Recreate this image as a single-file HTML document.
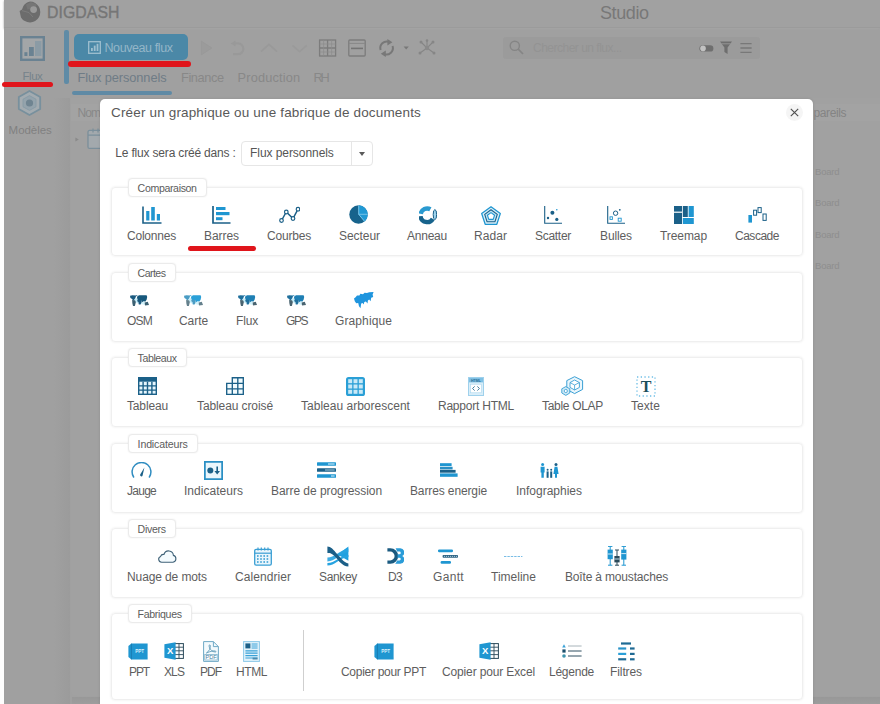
<!DOCTYPE html>
<html><head><meta charset="utf-8"><title>Studio</title>
<style>
html,body{margin:0;padding:0}
body{width:880px;height:704px;overflow:hidden;position:relative;background:#a0a0a0;font-family:"Liberation Sans",sans-serif}
.abs{position:absolute}
.lb,.bg{position:absolute;text-align:center;white-space:nowrap;line-height:16px;height:16px}
.bg{text-align:left}
.fs{position:absolute;border:1px solid #efefef;border-radius:4px;box-sizing:border-box;box-shadow:0 0 2.5px rgba(0,0,0,0.09)}
.lg{position:absolute;border:1px solid #ebebeb;border-radius:4px;box-shadow:0 0 2px rgba(0,0,0,0.07);box-sizing:border-box;background:#fff;font-size:11px;color:#4a4a4a;text-align:center;line-height:17px;white-space:nowrap}
</style></head><body>

<div class="abs" style="left:0;top:0;width:4.4px;height:704px;background:#fdfdfd"></div>
<div class="abs" style="left:4.4px;top:0;width:876px;height:27px;background:#a1a1a1;border-bottom:1px solid #9b9b9b;box-shadow:0 1px 2px #a4a4a4"></div>
<div class="abs" style="left:54px;top:98px;width:16px;height:606px;background:linear-gradient(90deg,#a0a0a0,#9b9b9b)"></div>
<div class="abs" style="left:71px;top:98px;width:809px;height:598px;background:#a1a1a1;border-radius:0 0 0 6px"></div>
<div class="abs" style="left:71px;top:104px;width:40px;height:17px;background:#a3a3a3"></div>
<div class="abs" style="left:813px;top:104px;width:67px;height:17px;background:#a3a3a3"></div>
<div class="abs" style="left:72px;top:697px;width:808px;height:7px;background:linear-gradient(#989898,#9d9d9d)"></div>
<svg style="position:absolute;left:19.0px;top:1.0px" width="22" height="22" viewBox="0 0 22 22">
<path d="M11 0.6A10.4 10.4 0 1 1 2 16.4L0.6 10L3 8.4A10.4 10.4 0 0 1 11 0.6Z" fill="#6c6c6c"/>
<path d="M7 3.6L12 1L18 3.6L15 8L8.4 8.6Z" fill="#767676"/>
<circle cx="14.6" cy="8.6" r="3.4" fill="#9a9a9a"/>
<path d="M3 9.6L10 11.6L14 16" fill="none" stroke="#808080" stroke-width="0.8"/></svg>
<span class="bg" style="left:47px;top:2.83px;line-height:20px;height:20px;font-size:15.8px;letter-spacing:0.09px;color:#767676;-webkit-text-stroke:0.35px #767676;">DIGDASH</span>
<span class="bg" style="left:600px;top:2.76px;line-height:20px;height:20px;font-size:18px;letter-spacing:-0.41px;color:#787878;">Studio</span>
<svg style="position:absolute;left:19.9px;top:35.7px" width="25" height="25" viewBox="0 0 25 25">
<rect x="1.2" y="1.2" width="22.6" height="22.6" fill="#a3a6a8" stroke="#6a8292" stroke-width="2.4"/>
<rect x="4.4" y="16.2" width="3" height="3.8" fill="#6a8292"/>
<rect x="9" y="11" width="4.8" height="9" fill="#6a8292"/>
<rect x="15" y="5" width="6.4" height="15" fill="#8b9ba5"/></svg>
<span class="bg" style="left:22.5px;top:65.62px;line-height:20px;height:20px;font-size:11.5px;letter-spacing:-0.47px;color:#76838b;">Flux</span>
<div class="abs" style="left:2px;top:82.1px;width:50.5px;height:4.6px;border-radius:3px;background:#e0151b"></div>
<svg style="position:absolute;left:17.0px;top:90.0px" width="25" height="26" viewBox="0 0 25 26">
<path d="M12.5 1L23.2 7V19L12.5 25L1.8 19V7Z" fill="#a3abb0" stroke="#78909d" stroke-width="1.8" stroke-linejoin="round"/>
<path d="M12.5 5.6L19 9.2V16.8L12.5 20.4L6 16.8V9.2Z" fill="#94a3ac" stroke="#8599a4" stroke-width="0.8"/>
<circle cx="12.5" cy="13" r="3.6" fill="#6f8491"/></svg>
<span class="bg" style="left:8.6px;top:119.72px;line-height:20px;height:20px;font-size:11.5px;letter-spacing:-0.04px;color:#808080;">Modèles</span>
<div class="abs" style="left:64px;top:30px;width:5px;height:54px;background:#5f8ba6;border-radius:2px"></div>
<div class="abs" style="left:74px;top:34px;width:114px;height:26px;background:#4b88a7;border-radius:5px"></div>
<svg style="position:absolute;left:88.2px;top:41.2px" width="13" height="13" viewBox="0 0 13 13">
<rect x="0.7" y="0.7" width="11.6" height="11.6" fill="none" stroke="#9fbfcf" stroke-width="1.3"/>
<rect x="3" y="7" width="1.8" height="3" fill="#9fbfcf"/><rect x="5.8" y="4.6" width="1.8" height="5.4" fill="#9fbfcf"/><rect x="8.6" y="2.8" width="1.8" height="7.2" fill="#9fbfcf"/></svg>
<span class="bg" style="left:104.5px;top:38.47px;line-height:20px;height:20px;font-size:12.5px;letter-spacing:-0.41px;color:#94b6c8;">Nouveau flux</span>
<div class="abs" style="left:68px;top:61px;width:123px;height:5.5px;border-radius:3px;background:#e0151b"></div>
<svg style="position:absolute;left:200.0px;top:39.0px" width="236" height="18" viewBox="0 0 236 18">
<path d="M1.4 2.2L11.8 9L1.4 15.8Z" fill="#9b9b9b" stroke="#999" stroke-width="1"/>
<path d="M33 4.4H38A5.4 5.4 0 0 1 38 15.2H33" fill="none" stroke="#999" stroke-width="2.2"/><path d="M30.6 4.4L35.6 1.4V7.4Z" fill="#999"/>
<path d="M61 12.6L69 5.4L77 12.6" fill="none" stroke="#999" stroke-width="1.8"/>
<path d="M92.4 6.4L99.6 12.6L106.8 6.4" fill="none" stroke="#9a9a9a" stroke-width="1.8"/>
<rect x="119.6" y="1" width="16" height="16" fill="none" stroke="#7c7c7c" stroke-width="1.3"/><path d="M119.6 9H135.6M127.6 1V17" stroke="#7c7c7c" stroke-width="1.3"/><path d="M119.6 5H135.6M119.6 13H135.6M123.6 1V17M131.6 1V17" stroke="#8c8c8c" stroke-width="0.7"/>
<rect x="148.8" y="1" width="16.4" height="16" rx="1" fill="none" stroke="#7c7c7c" stroke-width="1.3"/><path d="M148.8 4.4H165.2" stroke="#888" stroke-width="1"/><path d="M151 9.4H163" stroke="#747474" stroke-width="1.6"/>
<path d="M180.6 11A6.6 6.6 0 0 1 189 2.8" fill="none" stroke="#787878" stroke-width="2"/><path d="M187.4 0L192.4 3.2L187.4 6.4Z" fill="#787878"/>
<path d="M192.6 7A6.6 6.6 0 0 1 184.2 15.2" fill="none" stroke="#787878" stroke-width="2"/><path d="M185.8 18L180.8 14.8L185.8 11.6Z" fill="#787878"/>
<path d="M203.6 7.4H208.8L206.2 10.6Z" fill="#787878"/>
<path d="M227 9L221 3M227 9L233 3M227 9L220 14M227 9L234 14M227 9V1.6" stroke="#868686" stroke-width="1.1" fill="none"/>
<circle cx="227" cy="9" r="2.2" fill="#8a8a8a"/><circle cx="221" cy="3" r="1.5" fill="#868686"/><circle cx="233" cy="3" r="1.5" fill="#868686"/><circle cx="220" cy="14" r="1.5" fill="#868686"/><circle cx="234" cy="14" r="1.5" fill="#868686"/><circle cx="227" cy="1.6" r="1.3" fill="#868686"/></svg>
<div class="abs" style="left:502.5px;top:36.5px;width:257.5px;height:22px;background:#9b9b9b;border-radius:3px"></div>
<svg style="position:absolute;left:508.5px;top:40.0px" width="15" height="15" viewBox="0 0 15 15"><circle cx="5.8" cy="5.8" r="4.6" fill="none" stroke="#858585" stroke-width="1.4"/><path d="M9.2 9.2L14 14" stroke="#858585" stroke-width="1.7"/></svg>
<span class="bg" style="left:533px;top:37.84px;line-height:20px;height:20px;font-size:12px;letter-spacing:-0.50px;color:#939393;">Chercher un flux...</span>
<svg style="position:absolute;left:699.0px;top:40.5px" width="54" height="14" viewBox="0 0 54 14">
<rect x="0.4" y="4.2" width="14" height="6.4" rx="3.2" fill="#6f6f6f"/><circle cx="4" cy="7.4" r="2.8" fill="#c2c2c2"/>
<path d="M21 0.6H33L28.6 6.4V13L25.4 11V6.4Z" fill="#6e6e6e"/><path d="M22.4 2.8H31.6" stroke="#a0a0a0" stroke-width="0.8"/>
<path d="M41.4 2.6H52.6M41.4 7H52.6M41.4 11.4H52.6" stroke="#787878" stroke-width="1.3"/></svg>
<span class="bg" style="left:77.5px;top:67.56px;line-height:20px;height:20px;font-size:12.8px;letter-spacing:-0.09px;color:#6f7c86;">Flux personnels</span>
<span class="bg" style="left:181px;top:67.56px;line-height:20px;height:20px;font-size:12.8px;letter-spacing:-0.42px;color:#888;">Finance</span>
<span class="bg" style="left:237.5px;top:67.56px;line-height:20px;height:20px;font-size:12.8px;letter-spacing:0.17px;color:#888;">Production</span>
<span class="bg" style="left:313.6px;top:67.56px;line-height:20px;height:20px;font-size:12.8px;letter-spacing:-2.29px;color:#888;">RH</span>
<div class="abs" style="left:72px;top:91px;width:100px;height:3.6px;background:#5f8aa5;border-radius:2px"></div>
<span class="bg" style="left:77.5px;top:102.84px;line-height:20px;height:20px;font-size:12px;letter-spacing:-0.92px;color:#888;">Nom</span>
<span class="bg" style="left:813.5px;top:102.84px;line-height:20px;height:20px;font-size:12px;letter-spacing:-0.39px;color:#848484;">pareils</span>
<span class="bg" style="left:815px;top:161.91px;line-height:20px;height:20px;font-size:9.5px;letter-spacing:-0.21px;color:#8e8e8e;">Board</span>
<span class="bg" style="left:815px;top:193.21px;line-height:20px;height:20px;font-size:9.5px;letter-spacing:-0.21px;color:#8e8e8e;">Board</span>
<span class="bg" style="left:815px;top:224.91px;line-height:20px;height:20px;font-size:9.5px;letter-spacing:-0.21px;color:#8e8e8e;">Board</span>
<span class="bg" style="left:815px;top:256.41px;line-height:20px;height:20px;font-size:9.5px;letter-spacing:-0.21px;color:#8e8e8e;">Board</span>
<svg style="position:absolute;left:75.0px;top:128.0px" width="36" height="22" viewBox="0 0 36 22">
<path d="M0.4 9.4L3.8 11.4L0.4 13.4Z" fill="#8a8a8a"/>
<rect x="13" y="2.4" width="22" height="18" rx="1.5" fill="#a3a9ad" stroke="#7b8f9b" stroke-width="1.3"/>
<path d="M13 7.2H35M18 0.6V4.4M23 0.6V4.4" stroke="#7b8f9b" stroke-width="1.2"/></svg>
<div class="abs" style="left:100px;top:99px;width:713px;height:620px;background:#fff;border-radius:5px;box-shadow:0 0 3px rgba(0,0,0,0.12)"></div>
<span class="bg" style="left:111px;top:102.72px;line-height:20px;height:20px;font-size:13.5px;letter-spacing:0.16px;color:#595959;">Créer un graphique ou une fabrique de documents</span>
<div class="abs" style="left:785.5px;top:104px;width:17px;height:17px;border-radius:9px;background:#f5f5f5"></div>
<svg style="position:absolute;left:789.5px;top:107.8px" width="9" height="9" viewBox="0 0 9 9"><path d="M0.8 0.8L8.2 8.2M8.2 0.8L0.8 8.2" stroke="#505050" stroke-width="1.15" fill="none"/></svg>
<span class="bg" style="left:115.3px;top:143.24px;line-height:20px;height:20px;font-size:12px;letter-spacing:-0.18px;color:#555;">Le flux sera créé dans :</span>
<div class="abs" style="left:241px;top:141px;width:132px;height:25px;border:1px solid #e6e6e6;border-radius:4px;box-sizing:border-box"></div>
<div class="abs" style="left:351px;top:142px;width:1px;height:23px;background:#e6e6e6"></div>
<span class="bg" style="left:250px;top:143.24px;line-height:20px;height:20px;font-size:12px;letter-spacing:-0.06px;color:#555;">Flux personnels</span>
<div class="abs" style="left:358.6px;top:151.5px;width:0;height:0;border-left:3.2px solid transparent;border-right:3.2px solid transparent;border-top:4.5px solid #5a5a5a"></div>
<div class="fs" style="left:111px;top:187px;width:692px;height:69px"></div>
<div class="lg" style="left:128px;top:178px;width:79px;height:18.5px"></div>
<span class="bg" style="left:137.6px;top:177.93px;line-height:20px;height:20px;font-size:10.6px;letter-spacing:-0.36px;color:#5c5c5c;">Comparaison</span>
<div class="fs" style="left:111px;top:272px;width:692px;height:70px"></div>
<div class="lg" style="left:128px;top:263px;width:48px;height:18.5px"></div>
<span class="bg" style="left:137.6px;top:262.93px;line-height:20px;height:20px;font-size:10.6px;letter-spacing:-0.56px;color:#5c5c5c;">Cartes</span>
<div class="fs" style="left:111px;top:357px;width:692px;height:70px"></div>
<div class="lg" style="left:128px;top:348px;width:59px;height:18.5px"></div>
<span class="bg" style="left:137.6px;top:347.93px;line-height:20px;height:20px;font-size:10.6px;letter-spacing:-0.43px;color:#5c5c5c;">Tableaux</span>
<div class="fs" style="left:111px;top:443px;width:692px;height:70px"></div>
<div class="lg" style="left:128px;top:434px;width:70px;height:18.5px"></div>
<span class="bg" style="left:137.6px;top:433.93px;line-height:20px;height:20px;font-size:10.6px;letter-spacing:-0.15px;color:#5c5c5c;">Indicateurs</span>
<div class="fs" style="left:111px;top:528px;width:692px;height:70px"></div>
<div class="lg" style="left:128px;top:519px;width:48px;height:18.5px"></div>
<span class="bg" style="left:137.6px;top:518.93px;line-height:20px;height:20px;font-size:10.6px;letter-spacing:-0.33px;color:#5c5c5c;">Divers</span>
<div class="fs" style="left:111px;top:613px;width:692px;height:87px"></div>
<div class="lg" style="left:128px;top:604px;width:64px;height:18.5px"></div>
<span class="bg" style="left:137.6px;top:603.93px;line-height:20px;height:20px;font-size:10.6px;letter-spacing:-0.34px;color:#5c5c5c;">Fabriques</span>
<div class="abs" style="left:303px;top:630px;width:1px;height:61px;background:#cfcfcf"></div>
<svg style="position:absolute;left:141.5px;top:206.0px" width="20" height="18" viewBox="0 0 20 18">
<path d="M1 0.5V17H19.5" fill="none" stroke="#1b6088" stroke-width="1.6"/>
<rect x="4.2" y="5" width="3.2" height="9.5" fill="#1f96d1"/>
<rect x="9.2" y="1" width="3.6" height="13.5" fill="#1f96d1"/>
<rect x="14.8" y="8" width="3.2" height="6.5" fill="#1f96d1"/></svg>
<span class="lb" style="left:117px;width:69px;top:228px;font-size:12px;letter-spacing:-0.21px;color:#5e5e5e">Colonnes</span>
<svg style="position:absolute;left:212.0px;top:206.0px" width="19" height="18" viewBox="0 0 19 18">
<path d="M1 0V17H18.5" fill="none" stroke="#1b6088" stroke-width="1.7"/>
<rect x="4" y="1" width="9.5" height="3" fill="#1f96d1"/>
<rect x="4" y="6" width="13.5" height="3.2" fill="#1f96d1"/>
<rect x="4" y="11.2" width="6.5" height="3" fill="#1f96d1"/></svg>
<span class="lb" style="left:194px;width:55px;top:228px;font-size:12px;letter-spacing:-0.06px;color:#5e5e5e">Barres</span>
<svg style="position:absolute;left:278.5px;top:206.0px" width="21" height="18" viewBox="0 0 21 18">
<path d="M2.5 14.5L7.3 6L14 12.5L19 3.2" fill="none" stroke="#1b6088" stroke-width="1.5"/>
<g fill="#fff" stroke="#1b6088" stroke-width="1.2"><circle cx="2.5" cy="14.5" r="1.8"/><circle cx="7.3" cy="6" r="1.8"/><circle cx="14" cy="12.5" r="1.8"/><circle cx="19" cy="3.2" r="1.8"/></g></svg>
<span class="lb" style="left:257px;width:64px;top:228px;font-size:12px;letter-spacing:-0.19px;color:#5e5e5e">Courbes</span>
<svg style="position:absolute;left:349.1px;top:205.3px" width="19" height="19" viewBox="0 0 19 19">
<circle cx="9.5" cy="9.5" r="9.2" fill="#17638c"/>
<path d="M9.9 9.1V0.3A9.2 9.2 0 0 1 18.7 9.1Z" fill="#2199d4"/>
<path d="M9.9 9.5H18.7A9.2 9.2 0 0 1 15.6 16.4Z" fill="#2199d4"/>
<path d="M9.7 0.3V9.3H18.7M9.7 9.3L15.6 16.4" fill="none" stroke="#7fd0f5" stroke-width="0.9"/></svg>
<span class="lb" style="left:329px;width:61px;top:228px;font-size:12px;letter-spacing:-0.05px;color:#5e5e5e">Secteur</span>
<svg style="position:absolute;left:418.5px;top:205.5px" width="18" height="19" viewBox="0 0 18 19">
<path d="M1.73 7.8A6.6 6.6 0 0 1 11.4 3.3" fill="none" stroke="#2a9ad0" stroke-width="4.4"/>
<path d="M13.8 12.8A6.6 6.6 0 0 1 1.52 10.1" fill="none" stroke="#17638c" stroke-width="4.4"/>
<ellipse cx="15.9" cy="8.6" rx="1.7" ry="5" fill="#9fd4ee" stroke="#1b6088" stroke-width="1"/></svg>
<span class="lb" style="left:397px;width:60px;top:228px;font-size:12px;letter-spacing:-0.23px;color:#5e5e5e">Anneau</span>
<svg style="position:absolute;left:480.5px;top:205.5px" width="20" height="19" viewBox="0 0 20 19">
<path d="M10 0.8L19.3 7.6L15.8 18.3H4.2L0.7 7.6Z" fill="#d8eef8" stroke="#1f96d1" stroke-width="1.3" stroke-linejoin="round"/>
<path d="M10 3.8L16.3 8.4L13.9 15.8H6.1L3.7 8.4Z" fill="#bfe3f4" stroke="#1b6088" stroke-width="1.1" stroke-linejoin="round"/>
<path d="M10 6.6L13.6 9.2L12.2 13.4H7.8L6.4 9.2Z" fill="#fff" stroke="#1f96d1" stroke-width="1.1" stroke-linejoin="round"/></svg>
<span class="lb" style="left:464px;width:53px;top:228px;font-size:12px;letter-spacing:0.06px;color:#5e5e5e">Radar</span>
<svg style="position:absolute;left:544.0px;top:206.0px" width="18" height="18" viewBox="0 0 18 18">
<path d="M0.7 0V17.3H18" fill="none" stroke="#1b6088" stroke-width="1.1"/>
<circle cx="8.4" cy="6.8" r="2" fill="#1b6088"/><circle cx="4" cy="12" r="1.2" fill="#1b6088"/><circle cx="12.8" cy="13.4" r="1.6" fill="#1b6088"/><circle cx="12.8" cy="3.8" r="0.8" fill="#1f96d1"/></svg>
<span class="lb" style="left:525px;width:56px;top:228px;font-size:12px;letter-spacing:-0.29px;color:#5e5e5e">Scatter</span>
<svg style="position:absolute;left:607.0px;top:206.0px" width="18" height="18" viewBox="0 0 18 18">
<path d="M0.7 0V17.3H18" fill="none" stroke="#1b6088" stroke-width="1.1"/>
<circle cx="8.6" cy="7.2" r="2.2" fill="none" stroke="#1b6088" stroke-width="1"/>
<rect x="3" y="10.8" width="2.4" height="2.6" fill="none" stroke="#1f96d1" stroke-width="0.9"/>
<rect x="11.2" y="12.2" width="3" height="3" fill="none" stroke="#1f96d1" stroke-width="0.9"/>
<circle cx="12.8" cy="3.8" r="0.9" fill="#1b6088"/></svg>
<span class="lb" style="left:590px;width:52px;top:228px;font-size:12px;letter-spacing:-0.11px;color:#5e5e5e">Bulles</span>
<svg style="position:absolute;left:673.5px;top:206.0px" width="20" height="18" viewBox="0 0 20 18">
<rect x="0" y="0" width="8" height="5.6" fill="#1b6088"/><rect x="0" y="6.8" width="8" height="11.2" fill="#1b6088"/>
<rect x="8.8" y="0" width="5" height="11" fill="#1b6088"/><rect x="14.6" y="0" width="5.2" height="11" fill="#1f96d1"/>
<rect x="8.8" y="12" width="11" height="6" fill="#1f96d1"/></svg>
<span class="lb" style="left:650px;width:67px;top:228px;font-size:12px;letter-spacing:-0.08px;color:#5e5e5e">Treemap</span>
<svg style="position:absolute;left:747.5px;top:207.0px" width="19" height="16" viewBox="0 0 19 16">
<rect x="0.4" y="8" width="3.6" height="7.6" fill="#1f96d1"/>
<rect x="5.6" y="3.2" width="3" height="5" fill="none" stroke="#1b6088" stroke-width="1"/>
<rect x="10" y="0.6" width="3.2" height="5" fill="none" stroke="#1b6088" stroke-width="1"/>
<rect x="15" y="7" width="3.2" height="6.4" fill="none" stroke="#1b6088" stroke-width="1"/></svg>
<span class="lb" style="left:725px;width:64px;top:228px;font-size:12px;letter-spacing:-0.48px;color:#5e5e5e">Cascade</span>
<svg style="position:absolute;left:130.0px;top:294.7px" width="19" height="11" viewBox="0 0 19 11">
<path d="M5.6 2.8L7 3.2L7.4 6.2L8.4 7.2L8.6 9L5.6 7L4.6 5.2Z" fill="#c4effb"/>
<path d="M11.8 6.8L12.6 7.2L13.8 6L15.2 6.8L14.6 7.6L15 10L11 9Z" fill="#d2f3fc"/>
<path d="M0 0.8L2.4 0.2L6.2 0.4L5.6 2.6L4.4 4.4L3.6 5.4L2.4 4.4L1.4 3.6L0.4 3Z" fill="#1b5a80"/>
<path d="M2.1 5.1L5 5.2L5.9 7L4.9 10.9L3 10.9L2.3 8Z" fill="#3b6072"/>
<path d="M5.9 0.3L7.4 0L7 1.5Z" fill="#17587c"/>
<path d="M7.2 1.4L9 0.2L16.6 0.2L17.2 2L16.6 4.8L15.2 6.8L13.8 6L12.6 7.2L11.2 5.6L8 5L7 3Z" fill="#17587c"/>
<path d="M7.4 4.6L11.2 5L11.8 6.8L10.6 9.4L8.8 9.4L8.4 7L7.2 6.2Z" fill="#1b5a80"/>
<path d="M14.6 7.6L17.8 6.8L19 10L15 10.4Z" fill="#3b6072"/></svg>
<span class="lb" style="left:117px;width:45px;top:313px;font-size:12px;letter-spacing:-0.78px;color:#5e5e5e">OSM</span>
<svg style="position:absolute;left:184.0px;top:294.7px" width="19" height="11" viewBox="0 0 19 11">
<path d="M5.6 2.8L7 3.2L7.4 6.2L8.4 7.2L8.6 9L5.6 7L4.6 5.2Z" fill="#c4effb"/>
<path d="M11.8 6.8L12.6 7.2L13.8 6L15.2 6.8L14.6 7.6L15 10L11 9Z" fill="#d2f3fc"/>
<path d="M0 0.8L2.4 0.2L6.2 0.4L5.6 2.6L4.4 4.4L3.6 5.4L2.4 4.4L1.4 3.6L0.4 3Z" fill="#4a9cc4"/>
<path d="M2.1 5.1L5 5.2L5.9 7L4.9 10.9L3 10.9L2.3 8Z" fill="#64808c"/>
<path d="M5.9 0.3L7.4 0L7 1.5Z" fill="#2aa0d8"/>
<path d="M7.2 1.4L9 0.2L16.6 0.2L17.2 2L16.6 4.8L15.2 6.8L13.8 6L12.6 7.2L11.2 5.6L8 5L7 3Z" fill="#2aa0d8"/>
<path d="M7.4 4.6L11.2 5L11.8 6.8L10.6 9.4L8.8 9.4L8.4 7L7.2 6.2Z" fill="#4a9cc4"/>
<path d="M14.6 7.6L17.8 6.8L19 10L15 10.4Z" fill="#64808c"/></svg>
<span class="lb" style="left:169px;width:49px;top:313px;font-size:12px;letter-spacing:-0.07px;color:#5e5e5e">Carte</span>
<svg style="position:absolute;left:237.5px;top:294.7px" width="19" height="11" viewBox="0 0 19 11">
<path d="M5.6 2.8L7 3.2L7.4 6.2L8.4 7.2L8.6 9L5.6 7L4.6 5.2Z" fill="#c4effb"/>
<path d="M11.8 6.8L12.6 7.2L13.8 6L15.2 6.8L14.6 7.6L15 10L11 9Z" fill="#d2f3fc"/>
<path d="M0 0.8L2.4 0.2L6.2 0.4L5.6 2.6L4.4 4.4L3.6 5.4L2.4 4.4L1.4 3.6L0.4 3Z" fill="#1f6f9c"/>
<path d="M2.1 5.1L5 5.2L5.9 7L4.9 10.9L3 10.9L2.3 8Z" fill="#4a6470"/>
<path d="M5.9 0.3L7.4 0L7 1.5Z" fill="#1e7fb4"/>
<path d="M7.2 1.4L9 0.2L16.6 0.2L17.2 2L16.6 4.8L15.2 6.8L13.8 6L12.6 7.2L11.2 5.6L8 5L7 3Z" fill="#1e7fb4"/>
<path d="M7.4 4.6L11.2 5L11.8 6.8L10.6 9.4L8.8 9.4L8.4 7L7.2 6.2Z" fill="#1f6f9c"/>
<path d="M14.6 7.6L17.8 6.8L19 10L15 10.4Z" fill="#4a6470"/></svg>
<span class="lb" style="left:226px;width:42px;top:313px;font-size:12px;letter-spacing:-0.17px;color:#5e5e5e">Flux</span>
<svg style="position:absolute;left:287.0px;top:294.7px" width="19" height="11" viewBox="0 0 19 11">
<path d="M5.6 2.8L7 3.2L7.4 6.2L8.4 7.2L8.6 9L5.6 7L4.6 5.2Z" fill="#c4effb"/>
<path d="M11.8 6.8L12.6 7.2L13.8 6L15.2 6.8L14.6 7.6L15 10L11 9Z" fill="#d2f3fc"/>
<path d="M0 0.8L2.4 0.2L6.2 0.4L5.6 2.6L4.4 4.4L3.6 5.4L2.4 4.4L1.4 3.6L0.4 3Z" fill="#1f6f9c"/>
<path d="M2.1 5.1L5 5.2L5.9 7L4.9 10.9L3 10.9L2.3 8Z" fill="#4a6470"/>
<path d="M5.9 0.3L7.4 0L7 1.5Z" fill="#1e7fb4"/>
<path d="M7.2 1.4L9 0.2L16.6 0.2L17.2 2L16.6 4.8L15.2 6.8L13.8 6L12.6 7.2L11.2 5.6L8 5L7 3Z" fill="#1e7fb4"/>
<path d="M7.4 4.6L11.2 5L11.8 6.8L10.6 9.4L8.8 9.4L8.4 7L7.2 6.2Z" fill="#1f6f9c"/>
<path d="M14.6 7.6L17.8 6.8L19 10L15 10.4Z" fill="#4a6470"/></svg>
<span class="lb" style="left:276px;width:41px;top:313px;font-size:12px;letter-spacing:-1.45px;color:#5e5e5e">GPS</span>
<svg style="position:absolute;left:353.5px;top:291.7px" width="20" height="17" viewBox="0 0 20 17">
<path d="M3 3.6L5.4 3.4L6.4 1.8L9 2.2L10.6 0.8L13 1L15.2 0.2L19.6 0L18.6 2.6L19.2 5L17.2 5.8L16.6 9.2L15.2 7.4L13.9 8.4L13.5 11.6L11.9 9.4L10.3 10L9.7 12.6L8.6 11L7.2 11.6L6.5 16.2L5 14.2L4.2 11L2.2 11.2L0.8 9.2L0 6.6L1.6 5.2Z" fill="#1f95de"/></svg>
<span class="lb" style="left:325px;width:77px;top:313px;font-size:12px;letter-spacing:0.11px;color:#5e5e5e">Graphique</span>
<svg style="position:absolute;left:138.0px;top:377.0px" width="19" height="18" viewBox="0 0 19 18">
<rect x="0.7" y="0.7" width="17.6" height="16.6" fill="#e6f6fd" stroke="#1b6088" stroke-width="1.4"/>
<rect x="0.7" y="0.7" width="17.6" height="4" fill="#1b6088"/>
<path d="M0.7 8.9H18.3M0.7 13.1H18.3M5.1 4.7V17.3M9.5 4.7V17.3M13.9 4.7V17.3" stroke="#1b6088" stroke-width="1.4" fill="none"/></svg>
<span class="lb" style="left:117px;width:61px;top:398px;font-size:12px;letter-spacing:-0.15px;color:#5e5e5e">Tableau</span>
<svg style="position:absolute;left:226.0px;top:377.0px" width="18" height="18" viewBox="0 0 18 18">
<path d="M6.3 0.7H17.3V17.3H0.7V6.3H6.3ZM6.3 6.3V17.3M11.8 0.7V17.3M6.3 6.3H17.3M0.7 11.8H17.3" fill="#f2fbfe" stroke="#1b6088" stroke-width="1.35"/></svg>
<span class="lb" style="left:187px;width:96px;top:398px;font-size:12px;letter-spacing:-0.10px;color:#5e5e5e">Tableau croisé</span>
<svg style="position:absolute;left:346.0px;top:376.5px" width="19" height="19" viewBox="0 0 19 19">
<rect x="0" y="0" width="19" height="19" rx="2.6" fill="#2a9fd6"/>
<g fill="#c9e9f7"><rect x="2.2" y="2.2" width="4" height="4"/><rect x="7.5" y="2.2" width="4" height="4"/><rect x="12.8" y="2.2" width="4" height="4"/>
<rect x="2.2" y="7.5" width="4" height="4"/><rect x="7.5" y="7.5" width="4" height="4"/><rect x="12.8" y="7.5" width="4" height="4"/>
<rect x="2.2" y="12.8" width="4" height="4"/><rect x="7.5" y="12.8" width="4" height="4"/><rect x="12.8" y="12.8" width="4" height="4"/></g></svg>
<span class="lb" style="left:291px;width:129px;top:398px;font-size:12px;letter-spacing:0.01px;color:#5e5e5e">Tableau arborescent</span>
<svg style="position:absolute;left:468.0px;top:376.5px" width="16" height="19" viewBox="0 0 16 19">
<rect x="0.5" y="0.5" width="15" height="18" fill="#d9eef9" stroke="#9fd1ec" stroke-width="1"/>
<rect x="1" y="1" width="14" height="4.4" fill="#7fc0e4"/>
<text x="8" y="4.6" font-family="Liberation Sans,sans-serif" font-size="3.6" font-weight="bold" fill="#2b6f95" text-anchor="middle">HTML</text>
<rect x="2.4" y="7.2" width="11.2" height="8.6" fill="#fff" stroke="#a9d6ee" stroke-width="0.6"/>
<path d="M6.6 9.4L4.6 11.5L6.6 13.6M9.4 9.4L11.4 11.5L9.4 13.6" fill="none" stroke="#3f7d9f" stroke-width="1"/></svg>
<span class="lb" style="left:428px;width:96px;top:398px;font-size:12px;letter-spacing:-0.22px;color:#5e5e5e">Rapport HTML</span>
<svg style="position:absolute;left:561.0px;top:376.0px" width="23" height="20" viewBox="0 0 23 20">
<path d="M13.6 0.7L21.6 4.6V13.4L13.6 17.6L5.8 13.4V4.6Z" fill="#eaf6fc" stroke="#3a9fd4" stroke-width="1"/>
<path d="M13.6 4L18.4 6.6V11.4L13.6 14L9 11.4V6.6Z" fill="#fff" stroke="#3a9fd4" stroke-width="0.9"/>
<path d="M13.6 9L18.4 6.6M13.6 9V14M13.6 9L9 6.6" stroke="#3a9fd4" stroke-width="0.8" fill="none"/>
<path d="M4.8 10.6L8.8 12.8V17L4.8 19.4L0.8 17V12.8Z" fill="#cfeaf7" stroke="#3a9fd4" stroke-width="0.9"/>
<circle cx="4.8" cy="15" r="1.6" fill="#fff" stroke="#3a9fd4" stroke-width="0.8"/></svg>
<span class="lb" style="left:532px;width:81px;top:398px;font-size:12px;letter-spacing:-0.30px;color:#5e5e5e">Table OLAP</span>
<svg style="position:absolute;left:635.5px;top:375.5px" width="20" height="21" viewBox="0 0 20 21">
<rect x="1" y="1" width="18" height="19" fill="none" stroke="#6fbfe6" stroke-width="1.3" stroke-dasharray="1.3 2.4"/>
<text x="10" y="16" font-family="Liberation Serif,serif" font-size="16" font-weight="bold" fill="#1d4f5c" text-anchor="middle">T</text></svg>
<span class="lb" style="left:621px;width:49px;top:398px;font-size:12px;letter-spacing:0.06px;color:#5e5e5e">Texte</span>
<svg style="position:absolute;left:131.0px;top:462.0px" width="21" height="16" viewBox="0 0 21 16">
<path d="M2.6 15A9.4 9.4 0 1 1 18.4 15" fill="none" stroke="#2f8cc0" stroke-width="1.5" stroke-linecap="round"/>
<path d="M9.2 12.6L13.4 5.6L11.6 13.6A1.3 1.3 0 0 1 9.2 12.6Z" fill="#1b6088"/></svg>
<span class="lb" style="left:117px;width:49px;top:483px;font-size:12px;letter-spacing:-0.74px;color:#5e5e5e">Jauge</span>
<svg style="position:absolute;left:204.0px;top:460.5px" width="19" height="19" viewBox="0 0 19 19">
<rect x="0.8" y="0.8" width="17.4" height="17.4" fill="#eaf6fc" stroke="#2a8fc4" stroke-width="1.9"/>
<circle cx="6.3" cy="9.6" r="3" fill="#1b6088"/>
<path d="M12.4 5.6V10H10.4L13.2 13.6L16 10H14V5.6Z" fill="#1b6088"/></svg>
<span class="lb" style="left:174px;width:79px;top:483px;font-size:12px;letter-spacing:0.03px;color:#5e5e5e">Indicateurs</span>
<svg style="position:absolute;left:317.0px;top:462.0px" width="19" height="16" viewBox="0 0 19 16">
<rect x="0" y="0.2" width="19" height="3.6" rx="0.6" fill="#1f96d1"/><rect x="11" y="1.4" width="6.6" height="1.2" fill="#bfe4f5"/>
<rect x="0" y="6.2" width="19" height="3.6" rx="0.6" fill="#1b6088"/><rect x="8" y="7.4" width="9.6" height="1.2" fill="#8fb6cc"/>
<rect x="0" y="12.2" width="19" height="3.6" rx="0.6" fill="#1f96d1"/><rect x="14" y="13.4" width="3.6" height="1.2" fill="#bfe4f5"/></svg>
<span class="lb" style="left:261px;width:131px;top:483px;font-size:12px;letter-spacing:-0.05px;color:#5e5e5e">Barre de progression</span>
<svg style="position:absolute;left:439.5px;top:463.0px" width="18" height="14" viewBox="0 0 18 14">
<rect x="0" y="0.2" width="11.6" height="2.9" fill="#1f96d1"/>
<rect x="0" y="3.8" width="12.6" height="2.6" fill="#2a8fc4"/>
<rect x="0" y="6.9" width="15.6" height="2.8" fill="#1b6088"/>
<rect x="0" y="10.4" width="17.6" height="3.4" fill="#1f96d1"/></svg>
<span class="lb" style="left:400px;width:97px;top:483px;font-size:12px;letter-spacing:-0.12px;color:#5e5e5e">Barres energie</span>
<svg style="position:absolute;left:539.5px;top:462.5px" width="19" height="15" viewBox="0 0 19 15">
<circle cx="2.6" cy="1.6" r="1.5" fill="#1f96d1"/><path d="M0.6 3.8H4.6V9.4H3.8V14.8H1.4V9.4H0.6Z" fill="#1f96d1"/>
<circle cx="7.6" cy="6.8" r="1" fill="#1b6088"/><rect x="6.6" y="8.4" width="2" height="6.4" fill="#1b6088"/>
<circle cx="11.2" cy="6.8" r="1" fill="#1b6088"/><rect x="10.2" y="8.4" width="2" height="6.4" fill="#1b6088"/>
<circle cx="16" cy="1.6" r="1.5" fill="#1b6088"/><path d="M14.6 3.8H17.4L18.6 11H17V14.8H15V11H13.4Z" fill="#1f96d1"/></svg>
<span class="lb" style="left:506px;width:86px;top:483px;font-size:12px;letter-spacing:-0.00px;color:#5e5e5e">Infographies</span>
<svg style="position:absolute;left:156.5px;top:549.0px" width="21" height="14" viewBox="0 0 21 14">
<path d="M4.6 13.2H16A3.5 3.5 0 0 0 16.4 6.4A4.8 4.8 0 0 0 7 5.4A3 3 0 0 0 3.6 7.4A3 3 0 0 0 4.6 13.2Z" fill="#f4fbfe" stroke="#3f6278" stroke-width="1.1"/></svg>
<span class="lb" style="left:117px;width:100px;top:569px;font-size:12px;letter-spacing:-0.11px;color:#5e5e5e">Nuage de mots</span>
<svg style="position:absolute;left:254.0px;top:546.5px" width="18" height="19" viewBox="0 0 18 19">
<rect x="0.7" y="2.4" width="16.6" height="15.8" rx="1.4" fill="#eaf6fc" stroke="#3a9fd4" stroke-width="1.3"/>
<path d="M0.7 6.2H17.3" stroke="#3a9fd4" stroke-width="1.2"/>
<path d="M4 0.4V3.6M7.3 0.4V3.6M10.7 0.4V3.6M14 0.4V3.6" stroke="#3a9fd4" stroke-width="1.2"/>
<g fill="#3a9fd4"><rect x="3" y="8.2" width="1.6" height="1.6"/><rect x="6.2" y="8.2" width="1.6" height="1.6"/><rect x="9.4" y="8.2" width="1.6" height="1.6"/><rect x="12.6" y="8.2" width="1.6" height="1.6"/>
<rect x="3" y="11.2" width="1.6" height="1.6"/><rect x="6.2" y="11.2" width="1.6" height="1.6"/><rect x="9.4" y="11.2" width="1.6" height="1.6"/><rect x="12.6" y="11.2" width="1.6" height="1.6"/>
<rect x="3" y="14.2" width="1.6" height="1.6"/><rect x="6.2" y="14.2" width="1.6" height="1.6"/><rect x="9.4" y="14.2" width="1.6" height="1.6"/><rect x="12.6" y="14.2" width="1.6" height="1.6"/></g></svg>
<span class="lb" style="left:225px;width:76px;top:569px;font-size:12px;letter-spacing:0.06px;color:#5e5e5e">Calendrier</span>
<svg style="position:absolute;left:327.0px;top:545.5px" width="22" height="21" viewBox="0 0 22 21">
<path d="M21.4 0.6L10.6 8.6L21.4 14.8Z" fill="#1fa0e0"/>
<path d="M0.4 11.6C8 11.6 10 6 21.4 2.6V6C12 8.4 8 15.4 0.4 15.4Z" fill="#27a3e0" opacity="0.9"/>
<path d="M0.4 17C8 17 12 10 21.4 9V11C12 12 8 19.6 0.4 19.6Z" fill="#27a3e0"/>
<path d="M0.4 0.6C4 0.6 6 3.4 10.6 8.6C15 13.4 17 16.6 21.4 17.4V20.6C15 20 12 15 8.4 11C5 7.6 3.6 7 0.4 7Z" fill="#1b5f88"/></svg>
<span class="lb" style="left:309px;width:58px;top:569px;font-size:12px;letter-spacing:-0.34px;color:#5e5e5e">Sankey</span>
<svg style="position:absolute;left:386.5px;top:548.0px" width="17" height="16" viewBox="0 0 17 16">
<path d="M0.4 0.2H3.4A7.8 7.8 0 0 1 3.4 15.8H0.4V12.4H3.2A4.4 4.4 0 0 0 3.2 3.6H0.4Z" fill="#1b5a80"/>
<path d="M8.6 0.2H12.6A4.2 4.2 0 0 1 15.2 8A4.2 4.2 0 0 1 12.6 15.8H8.2A9 9 0 0 0 10 12.4H12.4A1.3 1.3 0 0 0 12.4 9.7H10.6V6.3H12.4A1.3 1.3 0 0 0 12.4 3.6H10A9 9 0 0 0 8.6 0.2Z" fill="#2a9cd8"/></svg>
<span class="lb" style="left:378px;width:34px;top:569px;font-size:12px;letter-spacing:-0.67px;color:#5e5e5e">D3</span>
<svg style="position:absolute;left:437.7px;top:548.5px" width="20" height="15" viewBox="0 0 20 15">
<rect x="0" y="0.4" width="15" height="2.8" rx="1.2" fill="#1f96d1"/>
<rect x="4.6" y="6" width="15.4" height="2.8" rx="0.8" fill="#2f6585"/><path d="M6 7.4H19" stroke="#b9d4e2" stroke-width="0.9" stroke-dasharray="1.1 0.9"/>
<rect x="2.6" y="12" width="10.4" height="2.8" rx="1.2" fill="#1f96d1"/></svg>
<span class="lb" style="left:423px;width:51px;top:569px;font-size:12px;letter-spacing:0.33px;color:#5e5e5e">Gantt</span>
<svg style="position:absolute;left:504.0px;top:554.5px" width="19" height="3" viewBox="0 0 19 3">
<path d="M0 1.5H18.4" stroke="#79bde6" stroke-width="1.2" stroke-dasharray="2.4 1"/></svg>
<span class="lb" style="left:481px;width:65px;top:569px;font-size:12px;letter-spacing:0.01px;color:#5e5e5e">Timeline</span>
<svg style="position:absolute;left:606.5px;top:546.0px" width="20" height="20" viewBox="0 0 20 20">
<path d="M3.2 0.4V19.2M1 0.4H5.4M1 19.2H5.4" stroke="#1f96d1" stroke-width="1" fill="none"/>
<rect x="0.6" y="3.6" width="5.2" height="9.6" fill="#1f96d1"/><path d="M0.6 8H5.8" stroke="#cfeaf7" stroke-width="1"/>
<path d="M10 4V19.2M8 4H12M8 19.2H12" stroke="#2b4a5a" stroke-width="1" fill="none"/>
<rect x="7.4" y="10" width="5.2" height="6.4" fill="#2b4a5a"/><path d="M7.4 13H12.6" stroke="#cfeaf7" stroke-width="0.9"/>
<path d="M16.8 0.4V19.2M14.6 0.4H19M14.6 19.2H19" stroke="#1f96d1" stroke-width="1" fill="none"/>
<rect x="14.2" y="3.6" width="5.2" height="10" fill="#1f96d1"/><path d="M14.2 7.6H19.4" stroke="#cfeaf7" stroke-width="1"/></svg>
<span class="lb" style="left:555px;width:123px;top:569px;font-size:12px;letter-spacing:-0.17px;color:#5e5e5e">Boîte à moustaches</span>
<svg style="position:absolute;left:128.0px;top:642.5px" width="20" height="17" viewBox="0 0 20 17">
<path d="M0.4 3L3.4 0.6H19.6V16.4H3.4L0.4 14Z" fill="#1f96d1"/>
<path d="M3.4 0.6V16.4" stroke="#1877ab" stroke-width="0.8"/>
<text x="11.6" y="10.3" font-family="Liberation Sans,sans-serif" font-size="4.6" font-weight="bold" fill="#d7eefa" text-anchor="middle">PPT</text></svg>
<span class="lb" style="left:119px;width:40px;top:664px;font-size:12px;letter-spacing:-1.11px;color:#5e5e5e">PPT</span>
<svg style="position:absolute;left:164.0px;top:642.0px" width="20" height="18" viewBox="0 0 20 18">
<rect x="10" y="1.6" width="9.4" height="14.8" fill="#fff" stroke="#2b4a5a" stroke-width="1"/>
<path d="M10 5.2H19.4M10 8.8H19.4M10 12.6H19.4M15 1.6V16.4" stroke="#2b4a5a" stroke-width="0.9"/>
<path d="M0.4 2.2L11.6 0.2V17.8L0.4 15.8Z" fill="#1f96d1"/>
<text x="6.2" y="12.4" font-family="Liberation Sans,sans-serif" font-size="9.5" font-weight="bold" fill="#fff" text-anchor="middle">X</text></svg>
<span class="lb" style="left:154px;width:40px;top:664px;font-size:12px;letter-spacing:-0.89px;color:#5e5e5e">XLS</span>
<svg style="position:absolute;left:202.5px;top:640.5px" width="16" height="21" viewBox="0 0 16 21">
<path d="M0.6 0.6H10.4L15.4 5.6V20.4H0.6Z" fill="#f3fafd" stroke="#6fa9c6" stroke-width="1"/>
<path d="M10.4 0.6V5.6H15.4" fill="none" stroke="#6fa9c6" stroke-width="1"/>
<path d="M3.4 12C6 10.4 7.8 7 7.2 4.2C6.6 3.2 5.6 4.4 6.4 6.4C7.4 9 10 11.2 12.6 11C13.8 10.4 12.2 9.6 10 10C7.6 10.4 5 11.2 3.4 12Z" fill="none" stroke="#4f8fb0" stroke-width="0.8"/>
<rect x="1.8" y="13.4" width="12.4" height="5.6" fill="#fff" stroke="#6fa9c6" stroke-width="0.7"/>
<text x="8" y="18.2" font-family="Liberation Sans,sans-serif" font-size="5.6" fill="#3f7d9f" text-anchor="middle">PDF</text></svg>
<span class="lb" style="left:190px;width:41px;top:664px;font-size:12px;letter-spacing:-1.00px;color:#5e5e5e">PDF</span>
<svg style="position:absolute;left:243.0px;top:640.5px" width="17" height="21" viewBox="0 0 17 21">
<rect x="0.6" y="0.6" width="15.8" height="19.8" fill="#e3f3fb" stroke="#8cc8e8" stroke-width="1"/>
<rect x="2.4" y="2.4" width="5" height="5" fill="#1b6088"/>
<path d="M8.6 3H14.6M8.6 5H14.6M8.6 7H14.6" stroke="#3aa2d8" stroke-width="1"/>
<path d="M2.4 9.8H14.6M2.4 12.2H14.6M2.4 14.6H14.6M2.4 17H14.6" stroke="#3aa2d8" stroke-width="1.2"/>
<rect x="9.6" y="16.6" width="5" height="2" fill="#1b6088" opacity="0.6"/></svg>
<span class="lb" style="left:226px;width:51px;top:664px;font-size:12px;letter-spacing:-0.42px;color:#5e5e5e">HTML</span>
<svg style="position:absolute;left:373.5px;top:642.5px" width="20" height="17" viewBox="0 0 20 17">
<path d="M0.4 3L3.4 0.6H19.6V16.4H3.4L0.4 14Z" fill="#1f96d1"/>
<path d="M3.4 0.6V16.4" stroke="#1877ab" stroke-width="0.8"/>
<text x="11.6" y="10.3" font-family="Liberation Sans,sans-serif" font-size="4.6" font-weight="bold" fill="#d7eefa" text-anchor="middle">PPT</text></svg>
<span class="lb" style="left:331px;width:105px;top:664px;font-size:12px;letter-spacing:-0.29px;color:#5e5e5e">Copier pour PPT</span>
<svg style="position:absolute;left:478.5px;top:642.0px" width="20" height="18" viewBox="0 0 20 18">
<rect x="10" y="1.6" width="9.4" height="14.8" fill="#fff" stroke="#2b4a5a" stroke-width="1"/>
<path d="M10 5.2H19.4M10 8.8H19.4M10 12.6H19.4M15 1.6V16.4" stroke="#2b4a5a" stroke-width="0.9"/>
<path d="M0.4 2.2L11.6 0.2V17.8L0.4 15.8Z" fill="#1f96d1"/>
<text x="6.2" y="12.4" font-family="Liberation Sans,sans-serif" font-size="9.5" font-weight="bold" fill="#fff" text-anchor="middle">X</text></svg>
<span class="lb" style="left:432px;width:113px;top:664px;font-size:12px;letter-spacing:-0.14px;color:#5e5e5e">Copier pour Excel</span>
<svg style="position:absolute;left:561.5px;top:644.0px" width="20" height="14" viewBox="0 0 20 14">
<path d="M2 0.2L3.8 3.4H0.2Z" fill="#3aa2d8"/>
<rect x="0.4" y="5.4" width="3.2" height="3.2" fill="#1b4f6c"/>
<circle cx="2" cy="12" r="1.8" fill="#3f94ae"/>
<path d="M6 2H19.6" stroke="#a8b4ba" stroke-width="1"/>
<path d="M6 7H19.6M6 12H19.6" stroke="#2f4f60" stroke-width="1"/></svg>
<span class="lb" style="left:539px;width:65px;top:664px;font-size:12px;letter-spacing:-0.24px;color:#5e5e5e">Légende</span>
<svg style="position:absolute;left:617.5px;top:641.5px" width="17" height="19" viewBox="0 0 17 19">
<rect x="3" y="0.4" width="10" height="2.2" fill="#1f6a94"/>
<rect x="0.2" y="5.4" width="8" height="2.2" fill="#2a93c9"/><rect x="12" y="5.4" width="4.6" height="2.2" fill="#1f6a94"/>
<rect x="0.2" y="10.8" width="8" height="2.2" fill="#2a9fd8"/><rect x="12" y="10.8" width="4.6" height="2.2" fill="#1f6a94"/>
<rect x="0.2" y="16.2" width="8" height="2.2" fill="#1f6a94"/><rect x="12" y="16.2" width="4.6" height="2.2" fill="#1f6a94"/></svg>
<span class="lb" style="left:600px;width:52px;top:664px;font-size:12px;letter-spacing:-0.10px;color:#5e5e5e">Filtres</span>
<div class="abs" style="left:188px;top:246px;width:68px;height:4.8px;border-radius:3px;background:#e0151b"></div>
</body></html>
